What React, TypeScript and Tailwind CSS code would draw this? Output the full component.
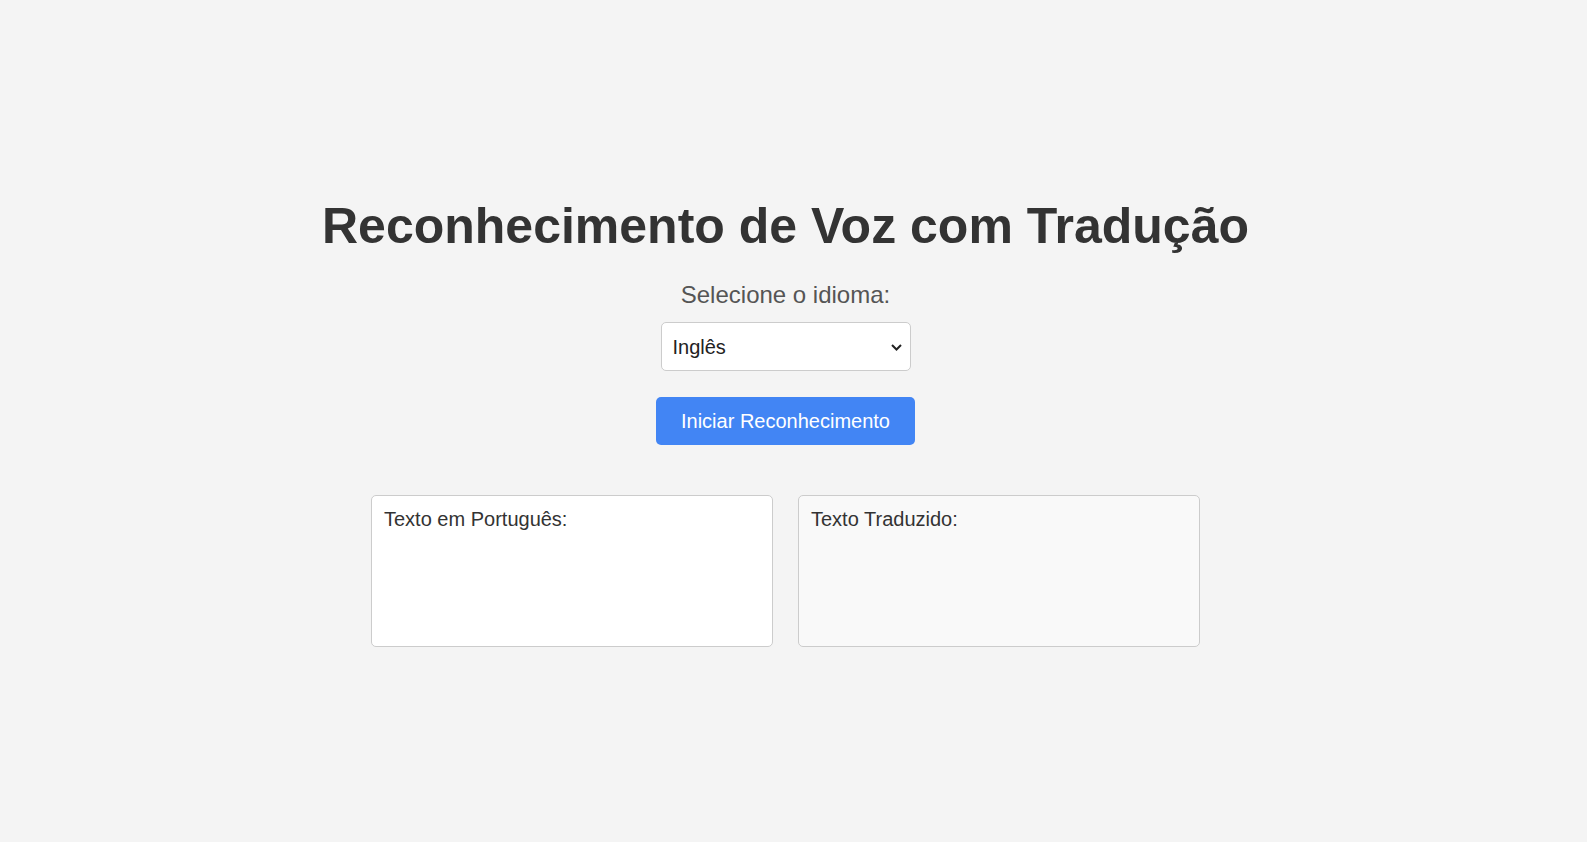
import React from "react";

const App = () => {
  return (
    <div
      className="w-full min-h-screen bg-[#f4f4f4] pr-[16px] pt-[198px] flex flex-col items-center text-[#333]"
      style={{ fontFamily: '"Liberation Sans", Arial, sans-serif' }}
    >
      <h1 className="text-[50px] leading-[56px] font-bold text-[#333]">
        Reconhecimento de Voz com Tradução
      </h1>
      <label className="mt-[27px] text-[24px] leading-[27px] text-[#555]">
        Selecione o idioma:
      </label>
      <div className="relative mt-[14px] w-[250px] h-[49px]">
        <select className="appearance-none w-full h-full bg-white border border-[#ccc] rounded-[5px] pl-[11px] pr-8 text-[20px] text-[#222] outline-none">
          <option>Inglês</option>
          <option>Espanhol</option>
          <option>Francês</option>
        </select>
        <svg
          className="absolute right-[9px] top-[22px] pointer-events-none"
          width="11"
          height="7"
          viewBox="0 0 11 7"
          fill="none"
        >
          <path d="M1 1l4.5 4.5L10 1" stroke="#222" strokeWidth="2" />
        </svg>
      </div>
      <button className="mt-[26px] w-[259px] h-[48px] bg-[#4285f4] text-white text-[20px] rounded-[5px]">
        Iniciar Reconhecimento
      </button>
      <div className="flex gap-[25px] mt-[50px]">
        <div className="w-[402px] h-[152px] border border-[#ccc] rounded-[5px] bg-white p-3 text-[20px] leading-[23px]">
          Texto em Português:
        </div>
        <div className="w-[402px] h-[152px] border border-[#ccc] rounded-[5px] bg-[#f9f9f9] p-3 text-[20px] leading-[23px]">
          Texto Traduzido:
        </div>
      </div>
    </div>
  );
};

export default App;
